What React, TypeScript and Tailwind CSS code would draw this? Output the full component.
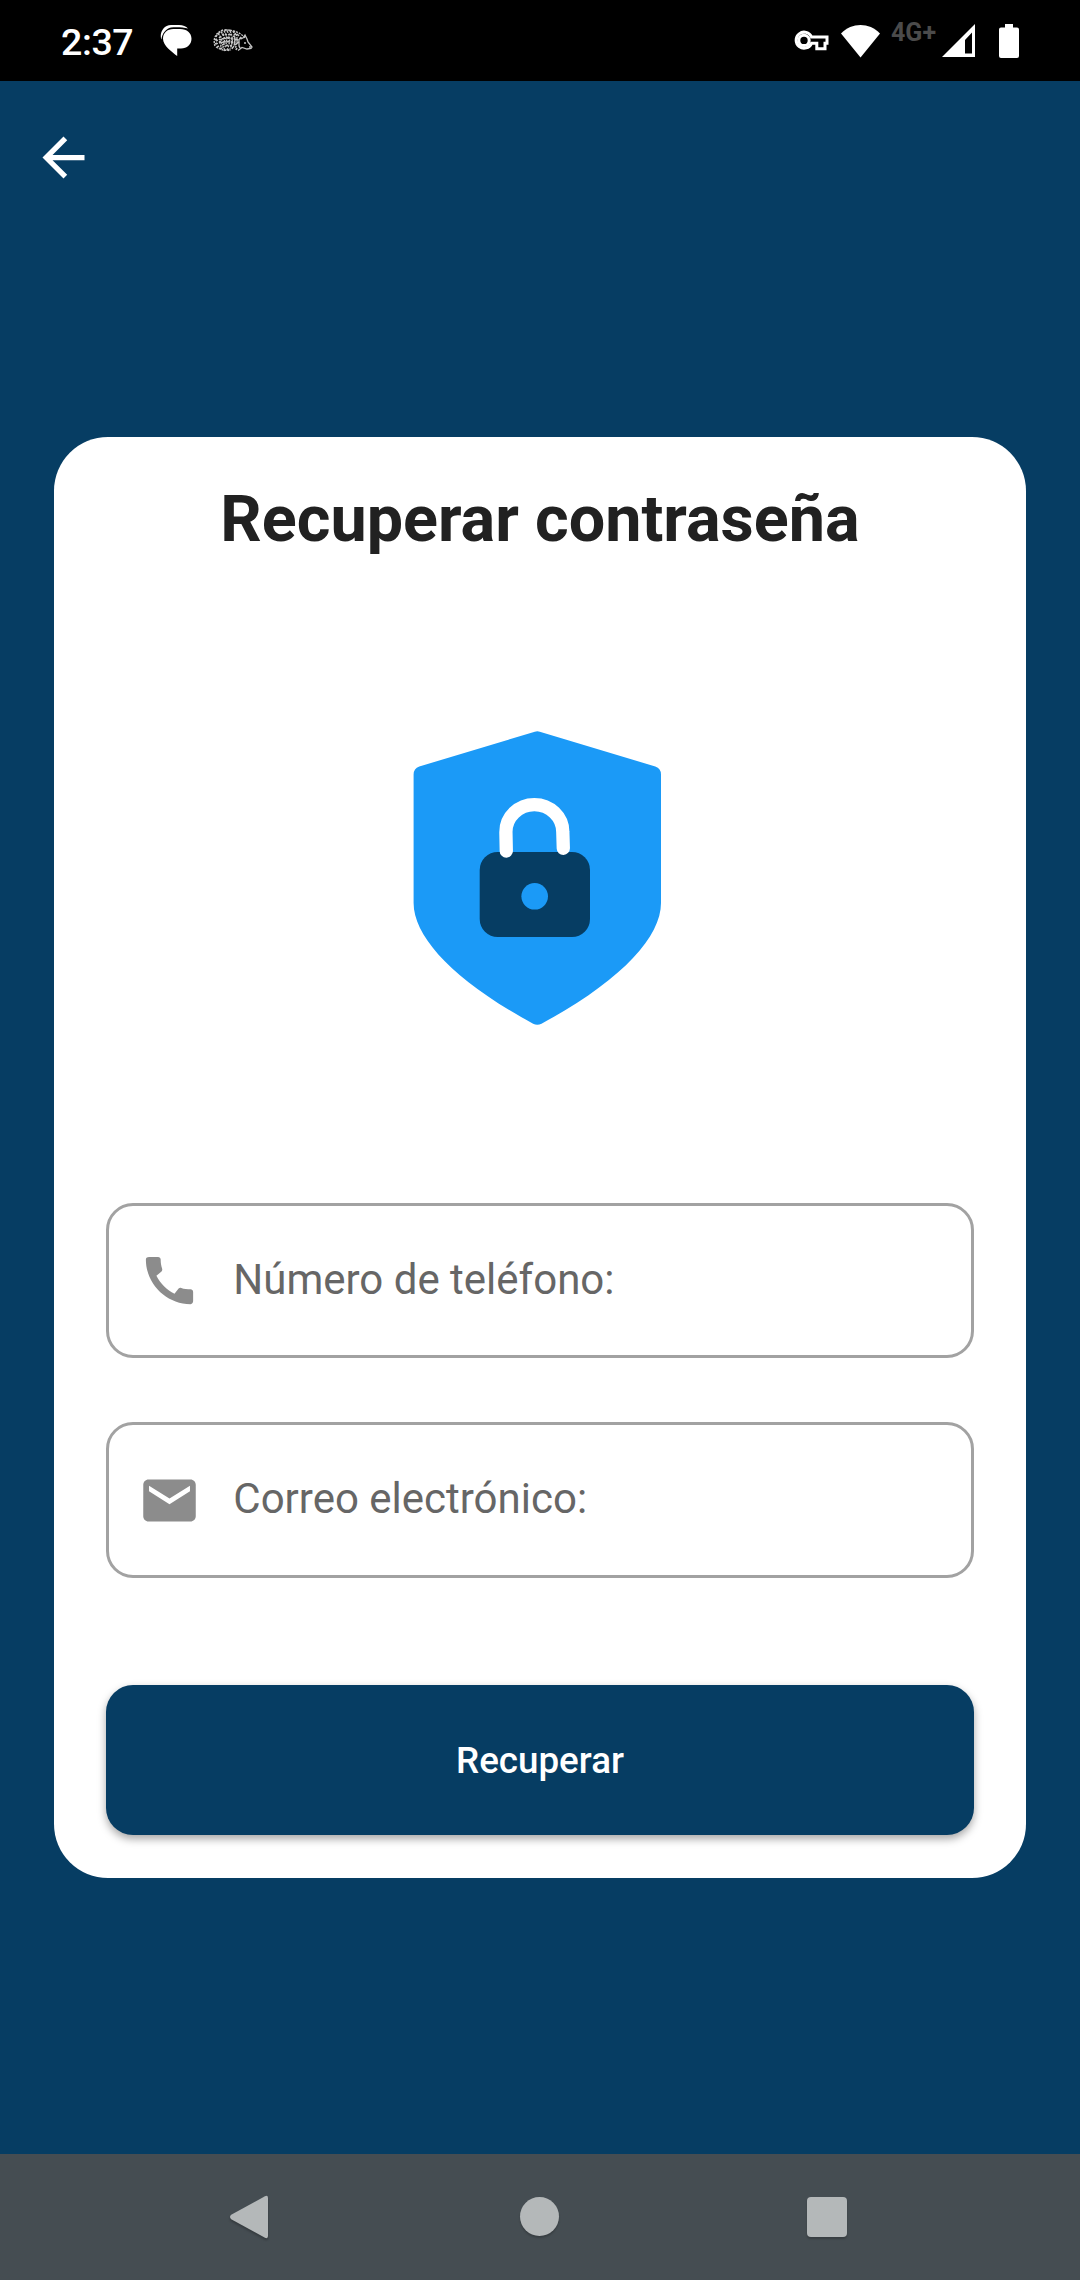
import type { ReactNode } from "react";

const hedgehogDots = "M217 37l1-2M219 34l2-2M222 31l2-1M226 30l2 0M230 30l2 1M234 31l2 1M238 34l2 2M216 40l2-1M216 44l2-1M218 47l2-1M221 49l2-1M225 51l1-2M229 51l1-2M233 49l1-2M237 50l1-2M241 48l-1-2M220 38l2-2M220 42l2-1M223 45l2-1M223 35l2-1M226 34l2 1M230 34l2 1M234 36l2 1M224 39l2-1M224 42l2 0M228 38l2-1M228 42l2-1M227 46l2-1M231 46l2-1M232 39l2 0M232 43l2-1M236 40l2-1M235 45l2-1M238 43l2-1M236 33l1 2M241 37l2 2";

function StatusBar() {
  return (
    <header className="flex h-[81px] items-center bg-black pl-[61px] pr-[61px] text-white">
      <span className="mt-[3px] w-[75px] text-[37.500px] leading-[45px] font-medium tracking-[-0.400px]">2:37</span>
      <svg viewBox="160 25 33 33" className="ml-[24px] h-[33px] w-[33px]" fill="currentColor">
        <path d="M161.500 40.500C159 35 163 26 171 26h8c4 0 7 1.500 9 3.500C183 28 175 28 171 28.500c-5 1-9 6-9.500 12Z" />
        <path d="M173.500 30h6.500c7 0 11.500 4 11.500 9.700S187 49.500 181 49.500h-3.800V57C172 53 163 46.500 163 39.700 163 34 167 30 173.500 30Z" />
      </svg>
      <svg viewBox="213 27 42 27" className="ml-[19px] h-[27px] w-[42px]" fill="none" stroke="#c4c4c4">
        <path strokeWidth="1.600" d={hedgehogDots} />
        <path
          strokeWidth="1.400"
          strokeDasharray="2 1"
          d="M216 46c-3-9 3-16 11-16 8 0 15 3 19 8M217 47c5 3 10 4 15 3M219 34c5 3 4 9 2 14M222 32c5 4 4 12 1 17M225 31c4 5 3 13 0 18M228 31c4 6 3 12 0 19M231 31c3 6 3 12 0 18M234 31c3 6 2 12 0 17M237 34c2 4 1 10-1 15M217 41c8-4 16-3 23-1M217 44c8-3 15-3 22-1"
        />
        <path strokeWidth="1.300" d="M240 39l4-1 2-3 2 4 1 3 4 5-1 1.500-4 .5-5-1.500-4 3M240 39v7" />
        <path strokeWidth="1.600" d="M245 43h2M250 47h2" />
      </svg>
      <div className="ml-auto flex items-center">
        <svg viewBox="794 30 36 22" className="h-[22px] w-[36px]" fill="none" stroke="currentColor" strokeWidth="3">
          <path d="M811.500 37h15.500v6.300h-2v5.500h-8.200v-5.500h-5.300a8 8 0 1 1 0-6.300Z" />
          <circle cx="804" cy="40.400" r="5.200" />
        </svg>
        <svg viewBox="840 22 40 34" className="ml-[10px] h-[34px] w-[40px]" fill="currentColor">
          <path d="M841 31.500c11-11.300 28-11.300 39 0L860.500 55.500Z" />
        </svg>
        <span className="ml-[11px] mb-[15px] w-[46px] text-[25px] leading-[28px] font-bold text-[#4b4b4b]">4G+</span>
        <svg viewBox="942 23 33 33" className="ml-[5px] h-[33px] w-[33px]" fill="currentColor">
          <path fillRule="evenodd" d="M975 23v33h-33ZM972 31.500l-7 7.500v13.500h7Z" />
        </svg>
        <svg viewBox="999 23 20 34" className="ml-[24px] h-[34px] w-[20px]" fill="currentColor">
          <path d="M1005 23h8v3.500h4q2 0 2 2V55q0 2-2 2h-16q-2 0-2-2V28.500q0-2 2-2h4Z" />
        </svg>
      </div>
    </header>
  );
}

function ShieldLock() {
  return (
    <svg viewBox="0 0 300 330" className="ml-[336px] mt-[152.600px] block h-[330px] w-[300px]">
      <path
        fill="#1b9af7"
        d="M144.800 21.700q2.500-.8 5 0L265.300 56.500q5.700 1.900 5.700 8V193C271 228 229 272 151.500 313.700q-4.200 1.900-8.400 0C66 272 23.600 228 23.600 193V64.500q0-6 5.700-8Z"
      />
      <rect x="89.700" y="142" width="110.300" height="85" rx="18" fill="#063d63" />
      <path
        d="M116.300 141l-.4-19a28.400 27.300 0 0 1 56.900 0l.5 16.300"
        stroke="white"
        strokeWidth="13.300"
        strokeLinecap="round"
        fill="none"
      />
      <circle cx="144.700" cy="186.300" r="13.300" fill="#1b9af7" />
    </svg>
  );
}

function Field({ label, icon, className }: { label: string; icon: ReactNode; className: string }) {
  return (
    <label className={`flex h-[155.400px] items-center rounded-[27px] border-[3px] border-[#a2a2a2] ${className}`}>
      <svg viewBox="0 0 24 24" className="ml-[29px] h-[63px] w-[63px] shrink-0 fill-[#8c8c8c]">
        {icon}
      </svg>
      <span className="ml-[32px] mt-[-2px] text-[42px] leading-[50px] text-[#666666]">{label}</span>
    </label>
  );
}

function NavBar() {
  return (
    <nav className="mt-auto flex h-[126px] items-center bg-[#454d52] pb-[1px] pl-[220px] text-[#b4b8b9]">
      <svg viewBox="0 0 60 60" className="h-[60px] w-[60px] drop-shadow-[0_2px_1px_rgba(0,0,0,0.25)]" fill="currentColor">
        <path d="M11.200 27.800 44.500 9.400Q48 7.800 48 11V49Q48 52.200 44.500 50.600L11.200 32.200Q8.800 30 11.200 27.800Z" />
      </svg>
      <div className="ml-[240px] size-[39px] rounded-full bg-current shadow-[0_2px_2px_rgba(0,0,0,0.2)]" />
      <div className="ml-[248px] size-[40px] rounded-[4px] bg-current shadow-[0_2px_2px_rgba(0,0,0,0.2)]" />
    </nav>
  );
}

export default function App() {
  return (
    <div className="flex h-[2280px] w-[1080px] flex-col overflow-hidden bg-[#063d63] font-['Roboto',sans-serif]">
      <StatusBar />
      <button className="ml-[31.500px] mt-[45px] size-[63px]" aria-label="Volver">
        <svg viewBox="0 0 24 24" className="size-full fill-white">
          <path d="M20 11H7.830l5.590-5.590L12 4l-8 8 8 8 1.410-1.410L7.830 13H20v-2z" />
        </svg>
      </button>
      <main className="mx-[54px] mt-[248.400px] h-[1441px] rounded-[54px] bg-white">
        <h1 className="pt-[45px] text-center text-[64.700px] leading-[75px] font-bold text-[#212121]">Recuperar contraseña</h1>
        <ShieldLock />
        <form className="flex flex-col px-[52.300px] pt-[163px]">
          <Field
            className=""
            label="Número de teléfono:"
            icon={<path d="M20.010 15.380c-1.230 0-2.420-.2-3.530-.56-.35-.12-.74-.03-1.010.24l-1.570 1.970c-2.830-1.350-5.480-3.900-6.890-6.830l1.950-1.660c.27-.28.35-.67.24-1.020-.37-1.110-.56-2.300-.56-3.530 0-.54-.45-.99-.99-.99H4.190C3.650 3 3 3.240 3 3.990 3 13.280 10.730 21 20.010 21c.71 0 .99-.63.99-1.180v-3.450c0-.54-.45-.99-.99-.99z" />}
          />
          <Field
            className="mt-[64px]"
            label="Correo electrónico:"
            icon={<path d="M20 4H4c-1.100 0-1.990.9-1.990 2L2 18c0 1.100.9 2 2 2h16c1.100 0 2-.9 2-2V6c0-1.100-.9-2-2-2zm-.2 4.500L12 13.400 4.200 8.500V6.400L12 11.200l7.800-4.800z" />}
          />
          <button
            type="button"
            className="mt-[107.500px] h-[149.800px] rounded-[27px] bg-[#063d63] text-[36.750px] font-medium text-white shadow-[0_4px_8px_rgba(0,0,0,0.350)]"
          >
            Recuperar
          </button>
        </form>
      </main>
      <NavBar />
    </div>
  );
}
